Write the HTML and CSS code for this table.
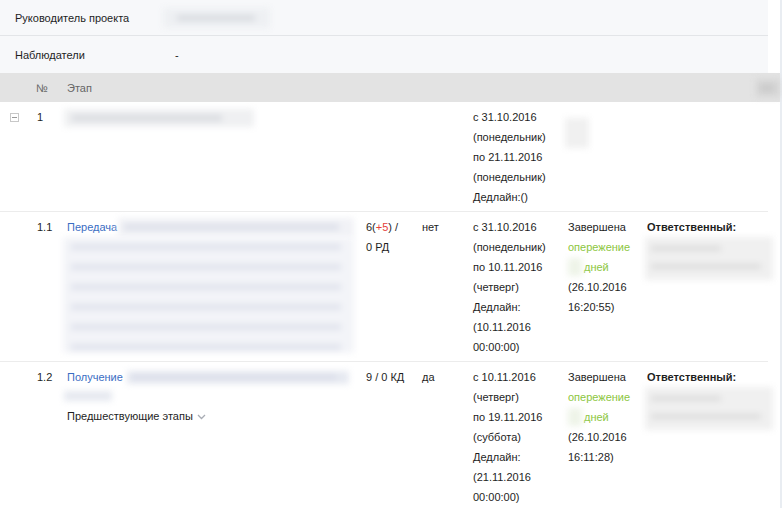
FILE: index.html
```html
<!DOCTYPE html>
<html lang="ru">
<head>
<meta charset="utf-8">
<link rel="stylesheet" href="styles.css">
</head>
<body>
<div class="page">
  <div class="main">
    <div class="info">
      <div class="info-row">
        <div class="info-label">Руководитель проекта</div>
        <div class="info-val"><span class="blur blur-manager"></span></div>
      </div>
      <div class="info-row">
        <div class="info-label">Наблюдатели</div>
        <div class="info-val dash">-</div>
      </div>
    </div>
    <div class="thead">
      <div class="th"></div>
      <div class="th">№</div>
      <div class="th">Этап</div>
      <div class="th-blur"><span class="blur blur-head"></span></div>
    </div>

    <div class="row">
      <div class="cell"><span class="toggle"></span></div>
      <div class="cell num">1</div>
      <div class="cell"><span class="blur blur-stage1"></span></div>
      <div class="cell"></div>
      <div class="cell"></div>
      <div class="cell dates">с 31.10.2016<br>(понедельник)<br>по 21.11.2016<br>(понедельник)<br>Дедлайн:()</div>
      <div class="cell"><span class="blur blur-small"></span></div>
      <div class="cell"></div>
    </div>

    <div class="row">
      <div class="cell"></div>
      <div class="cell num">1.1</div>
      <div class="cell stage">
        <div class="stage-line"><a class="link">Передача</a><span class="blur blur-line1"></span></div>
        <span class="blur blur-block"></span>
      </div>
      <div class="cell">6(<span class="red">+5</span>) /<br>0 РД</div>
      <div class="cell">нет</div>
      <div class="cell dates">с 31.10.2016<br>(понедельник)<br>по 10.11.2016<br>(четверг)<br>Дедлайн:<br>(10.11.2016<br>00:00:00)</div>
      <div class="cell">Завершена<br><span class="green">опережение</span><br><span class="blur blur-days"></span><span class="green">дней</span><br>(26.10.2016<br>16:20:55)</div>
      <div class="cell resp"><b>Ответственный:</b><span class="blur blur-resp"></span></div>
    </div>

    <div class="row last">
      <div class="cell"></div>
      <div class="cell num">1.2</div>
      <div class="cell stage">
        <div class="stage-line"><a class="link">Получение</a><span class="blur blur-line2"></span></div>
        <span class="blur blur-tail"></span>
        <div class="prev">Предшествующие этапы <svg class="chev" width="9" height="6" viewBox="0 0 9 6"><path d="M1 1l3.5 3.5L8 1" fill="none" stroke="#a8acb4" stroke-width="1.3"/></svg></div>
      </div>
      <div class="cell">9 / 0 КД</div>
      <div class="cell">да</div>
      <div class="cell dates">с 10.11.2016<br>(четверг)<br>по 19.11.2016<br>(суббота)<br>Дедлайн:<br>(21.11.2016<br>00:00:00)</div>
      <div class="cell">Завершена<br><span class="green">опережение</span><br><span class="blur blur-days"></span><span class="green">дней</span><br>(26.10.2016<br>16:11:28)</div>
      <div class="cell resp"><b>Ответственный:</b><span class="blur blur-resp"></span></div>
    </div>
  </div>
  <div class="strip"></div>
</div>
</body>
</html>
```

FILE: styles.css
```css
* { box-sizing: border-box; }
html, body { margin: 0; padding: 0; background: #fff; }
body {
  font-family: "Liberation Sans", Arial, sans-serif;
  font-size: 11px;
  color: #333;
  overflow: hidden;
  height: 508px;
}
.page {
  display: flex;
  width: 782px;
  height: 508px;
}
.main { width: 780px; }
.strip { width: 2px; background: #e9edf2; }

.info { width: 768px; background: #f7f8fa; }
.info-row {
  display: flex;
  align-items: center;
  height: 37px;
}
.info-row:first-child { height: 36px; border-bottom: 1px solid #e3e5e8; }
.info-row:last-child { height: 37px; }
.info-label { width: 163px; padding-left: 15px; color: #1e1e1e; }
.info-val { display: flex; align-items: center; }
.dash { padding-left: 12px; color: #1e1e1e; }

.blur { display: inline-block; filter: blur(3px); vertical-align: middle; }
.blur-manager {
  width: 107px; height: 20px;
  background: #eef0f3 linear-gradient(#d9dce1, #d9dce1) no-repeat 14px center / 78px 6px;
}

.thead {
  display: grid;
  grid-template-columns: 36px 31px 1fr 24px;
  align-items: center;
  height: 29px;
  background: #e3e3e3;
  color: #666;
}
.th-blur { height: 29px; display: flex; align-items: center; }
.blur-head {
  width: 24px; height: 18px;
  background: #d6d6d6 linear-gradient(#c8c8c8, #c8c8c8) no-repeat 4px center / 14px 6px;
}

.row {
  display: grid;
  grid-template-columns: 36px 31px 299px 56px 51px 95px 79px 1fr;
  width: 768px;
  line-height: 20px;
  padding: 5px 0 4px;
  border-bottom: 1px solid #ececec;
  color: #1e1e1e;
}
.row.last { border-bottom: none; }
.cell { min-width: 0; }
.num { padding-left: 1px; }
.dates { padding-right: 4px; }

.toggle {
  display: block;
  margin: 6px 0 0 10px;
  width: 9px; height: 9px;
  border: 1px solid #c8c8c8;
  background: linear-gradient(#999, #999) no-repeat center / 5px 1px;
}

.blur-stage1 {
  margin-left: -3px;
  width: 190px; height: 18px;
  background: #eff0f2 linear-gradient(#d9dbe0, #d9dbe0) no-repeat 8px center / 150px 6px;
}
.blur-small {
  margin-top: 11px; margin-left: -3px;
  width: 24px; height: 30px;
  background: #f0f0f0;
}

.stage-line { display: flex; align-items: center; white-space: nowrap; }
.link { color: #3a6dc3; cursor: pointer; }
.blur-line1 {
  margin-left: 1px;
  width: 236px; height: 19px;
  background: #f1f2f6 linear-gradient(#dcdfe9, #dcdfe9) no-repeat 6px center / 215px 6px;
}
.blur-block {
  display: block;
  margin-left: -4px;
  width: 291px; height: 116px;
  background-color: #f3f4f8;
  background-image: repeating-linear-gradient(to bottom, transparent 0 7px, #e0e3ed 7px 13px, transparent 13px 20px);
  background-repeat: no-repeat;
  background-position: 8px 0;
  background-size: 270px 116px;
}
.blur-line2 {
  margin-left: 4px;
  width: 222px; height: 13px;
  background: #e6e9f1 linear-gradient(#dcdfea, #dcdfea) no-repeat 4px center / 205px 6px;
}
.blur-tail {
  display: block;
  margin: 4px 0 5px -3px;
  width: 48px; height: 10px;
  background: #e6e9f0;
}
.prev { color: #1e1e1e; display: flex; align-items: center; gap: 4px; }
.chev { margin-top: 1px; }

.red { color: #e5403a; }
.green { color: #8cc63e; }
.blur-days {
  width: 14px; height: 18px;
  margin-right: 2px; margin-top: -2px;
  background: #eef4e8;
}
.resp b { color: #1e1e1e; }
.blur-resp {
  display: block;
  margin-left: -2px;
  width: 128px; height: 43px;
  background-color: #f0f0f0;
  background-image: linear-gradient(#dcdcdc, #dcdcdc), linear-gradient(#dcdcdc, #dcdcdc);
  background-repeat: no-repeat;
  background-position: 6px 9px, 6px 27px;
  background-size: 70px 5px, 110px 5px;
}
```
